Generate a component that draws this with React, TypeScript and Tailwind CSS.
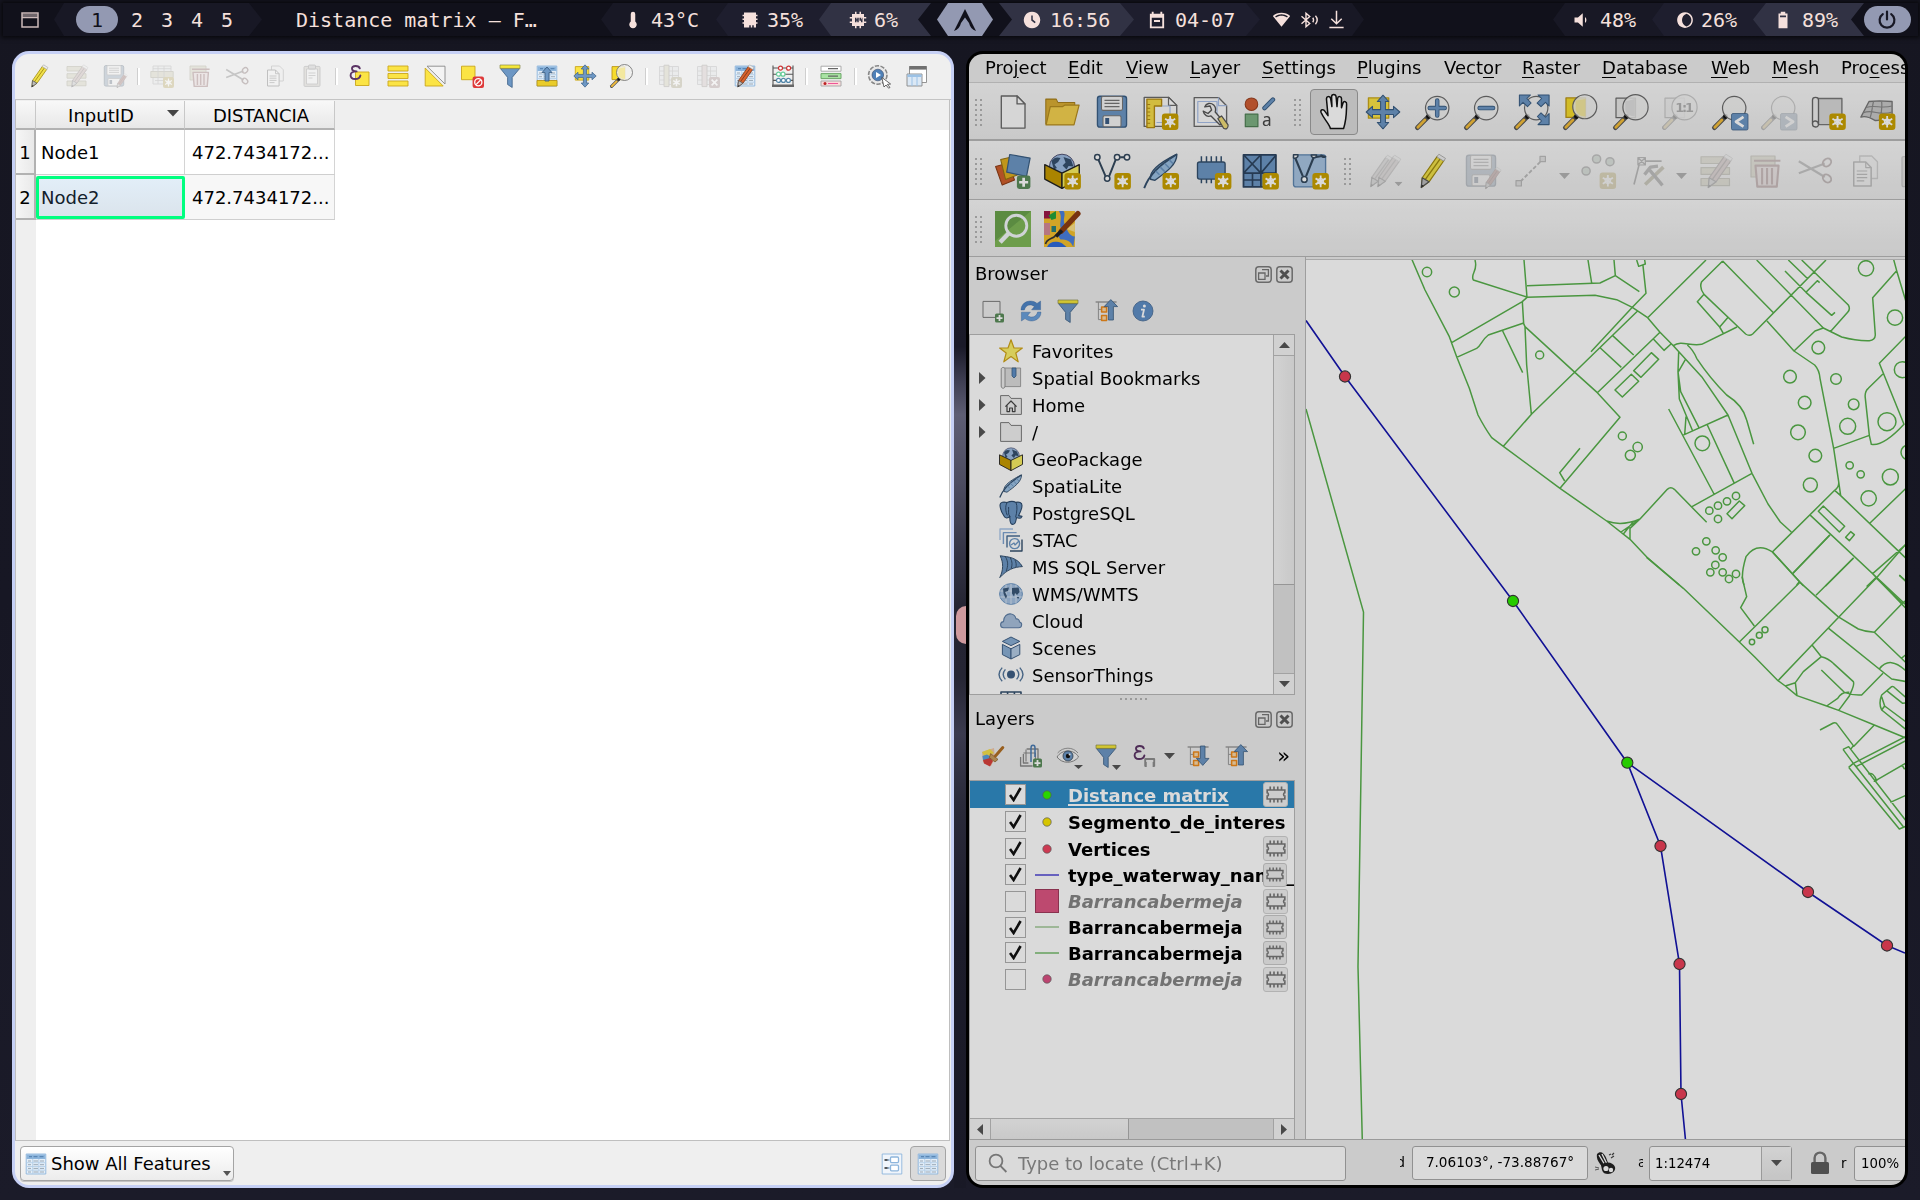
import React from "react";

type Kids = { children?: React.ReactNode };
type IconProps = Kids & { s?: number; off?: boolean };

const Svg = ({ children, s = 24, off }: IconProps) => (
  <svg
    width={s}
    height={s}
    viewBox="0 0 24 24"
    fill="none"
    strokeLinejoin="round"
    className={off ? "shrink-0 overflow-visible opacity-30 saturate-50" : "shrink-0 overflow-visible"}
  >
    {children}
  </svg>
);

/* ---------- shared icon parts ---------- */

const B = "#6d97c4";
const BD = "#3b5f85";

const Star = ({ x = 13, y = 13 }: { x?: number; y?: number }) => (
  <g transform={`translate(${x} ${y})`}>
    <rect width="11" height="11" rx="2" fill="#c9a000" />
    <path d="M5.5 1.6v7.8M2.1 3.5l6.8 4M8.9 3.5l-6.8 4" stroke="#fff" strokeWidth="1.2" />
    <circle cx="5.5" cy="5.5" r="1.8" stroke="#fff" strokeWidth=".8" />
  </g>
);
const Plus = ({ x = 15, y = 15, k = 1 }: { x?: number; y?: number; k?: number }) => (
  <g transform={`translate(${x} ${y}) scale(${k})`}>
    <rect width="9" height="9" rx="1.6" fill="#5a8c5a" />
    <path d="M4.5 1.5v6M1.5 4.5h6" stroke="#fff" strokeWidth="1.8" />
  </g>
);
const Handle = () => (
  <>
    <path d="M8.6 15.4L1.6 22.4" stroke="#555" strokeWidth="3.2" strokeLinecap="round" />
    <path d="M6.6 17.4L1.9 22.1" stroke="#f3bd3c" strokeWidth="1.9" strokeLinecap="round" />
    <circle cx="9" cy="15" r="1.6" fill="#111" />
  </>
);
const Lens = ({ cx = 14.5, cy = 8.5, r = 8 }: { cx?: number; cy?: number; r?: number }) => (
  <circle cx={cx} cy={cy} r={r} fill="#f0f0ee" fillOpacity=".85" stroke="#6b6b6b" strokeWidth=".8" />
);

const MoveArrows = () => (
  <path
    d="M12 .8L15.8 5H13.6V10.4H19V8.2L23.2 12L19 15.8V13.6H13.6V19H15.8L12 23.2L8.2 19H10.4V13.6H5V15.8L.8 12L5 8.2V10.4H10.4V5H8.2z"
    fill={B} stroke={BD} strokeWidth=".7"
  />
);

const PencilShape = ({ body = "#f0e04a", dark = "#a08a10" }: { body?: string; dark?: string }) => (
  <g>
    <path d="M5.5 16.5L15.5 2.2L20 5L10 19.2L5 22.8z" fill={body} stroke={dark} strokeWidth=".8" />
    <path d="M7.6 17.6L17.8 3.4" stroke={dark} strokeWidth=".9" />
    <path d="M15.2 2.6L16.6 .8L21 3.6L19.8 5.4z" fill="#eee" stroke="#aaa" strokeWidth=".6" />
    <path d="M5.5 16.5L10 19.2L4.8 23z" fill="#bbb" stroke="#555" strokeWidth=".8" />
    <path d="M5.2 21L4.6 23.2L6.6 22z" fill="#333" />
  </g>
);

const TableGrid = () => (
  <>
    <rect x="2.2" y="2" width="19.6" height="20" fill="#e4eef8" stroke="#8db5dc" strokeWidth=".9" />
    <rect x="2.6" y="2.4" width="18.8" height="4.6" fill="#8db5dc" />
    <path d="M5 4.7h3M9.5 4.7h4M15.5 4.7h4" stroke="#5a87b5" strokeWidth="1.2" />
    <path d="M8.7 7v15M14.8 7v15M2.5 10.7h19M2.5 14.5h19M2.5 18.2h19" stroke="#b5cfe8" strokeWidth=".9" />
    <path d="M9.5 9h4.5M9.5 12.7h4.5M9.5 16.4h4.5M9.5 20h4.5M16 9h4M16 12.7h4M16 16.4h4M16 20h4M4 9h3M4 12.7h3M4 16.4h3M4 20h3" stroke="#9aa8b5" strokeWidth="1" />
  </>
);

/* ---------- icons ---------- */

const PencilI = (p: IconProps) => <Svg {...p}><PencilShape /></Svg>;
const Pencils = (p: IconProps) => (
  <Svg {...p}><PencilShape body="#c9c2c2" dark="#8a8585" /><g transform="translate(5 0)"><PencilShape body="#cdb9b6" dark="#8f8583" /></g></Svg>
);
const Multi = (p: IconProps) => (
  <Svg {...p}>
    <path d="M2 2.5h19v4.5H2zM2 9.7h19v4.5H2zM2 17h19v4.8H2z" fill="#cfc992" stroke="#8f8a5c" strokeWidth=".8" />
    <g transform="translate(2 0)"><PencilShape body="#cf9d98" dark="#77605d" /></g>
  </Svg>
);
const Floppy = ({ pen, ...p }: IconProps & { pen?: boolean }) => (
  <Svg {...p}>
    <rect x="2.3" y="1.5" width="19.4" height="20.6" rx="1.6" fill={B} stroke={BD} strokeWidth=".9" />
    <rect x="5" y="1.6" width="14" height="9.3" rx="1" fill="#f4f4f4" stroke="#777" strokeWidth=".7" />
    <path d="M7 4.2h10M7 6.3h10M7 8.4h10" stroke="#777" strokeWidth=".8" />
    <rect x="6" y="14.5" width="12" height="7.3" rx="1" fill="#f4f4f4" stroke="#777" strokeWidth=".7" />
    <rect x="7.5" y="16" width="2.6" height="4" fill="#3c5d85" />
    {pen && <g transform="translate(12 9) scale(.64)"><PencilShape body="#c05a50" dark="#774038" /></g>}
  </Svg>
);
const AddRow = (p: IconProps) => (
  <Svg {...p}>
    <path d="M3 2h18v18H3z" fill="#e2e6ea" stroke="#999" strokeWidth=".8" />
    <path d="M.8 7.5h22.4v6H.8z" fill="#cfc992" stroke="#8f8a5c" strokeWidth=".8" />
    <path d="M3 4.7h18M5 16.5h14M8 2v18M14 2v18" stroke="#999" strokeWidth=".8" />
    <Star />
  </Svg>
);
const Trash = (p: IconProps) => (
  <Svg {...p}>
    <path d="M2 2h16v14H2z" fill="#cfc992" stroke="#8f8a5c" strokeWidth=".8" />
    <path d="M5 8.4h15.4l-1.2 14H6.2z" fill="#f0c9c9" stroke="#a04848" strokeWidth="1.4" />
    <path d="M4 5.2h17.6M9.4 10v11M12.7 10v11M16 10v11" stroke="#a04848" strokeWidth="1.4" />
  </Svg>
);
const Scissors = (p: IconProps) => (
  <Svg {...p}>
    <path d="M1.2 5.5L18.5 16M1.2 13.5L18.5 7" stroke="#666" strokeWidth="1.5" />
    <ellipse cx="20" cy="6.3" rx="3" ry="2.4" transform="rotate(-40 20 6.3)" stroke="#7a4848" strokeWidth="1.3" />
    <ellipse cx="20" cy="17" rx="3" ry="2.4" transform="rotate(40 20 17)" stroke="#7a4848" strokeWidth="1.3" />
  </Svg>
);
const Copy = (p: IconProps) => (
  <Svg {...p}>
    <path d="M8.5 2h8l3.8 3.8V17H8.5z" fill="#f2f2f2" stroke="#888" strokeWidth=".9" />
    <path d="M4.5 6h8l3.6 3.7V22H4.5z" fill="#f6f6f6" stroke="#555" strokeWidth="1" />
    <path d="M12.5 6v3.7h3.6M6.5 12h7M6.5 14.2h7M6.5 16.4h7M6.5 18.6h5" stroke="#555" strokeWidth=".8" />
  </Svg>
);
const Paste = (p: IconProps) => (
  <Svg {...p}>
    <rect x="4" y="2.4" width="16" height="20" rx="1" fill="#c9c2b2" stroke="#777" strokeWidth=".9" />
    <rect x="6.5" y="5" width="11" height="15" fill="#f6f6f6" stroke="#777" strokeWidth=".8" />
    <rect x="8.5" y="1" width="7" height="4" rx="1" fill="#bbb" stroke="#666" strokeWidth=".8" />
    <path d="M8.5 9h7M8.5 11.5h7M8.5 14h4" stroke="#777" strokeWidth=".8" />
  </Svg>
);
const Eps = ({ phones, ...p }: IconProps & { phones?: boolean }) => (
  <Svg {...p}>
    {!phones && <rect x="7.5" y="8" width="13.5" height="13.5" fill="#fbe445" stroke="#c9a61b" strokeWidth=".9" />}
    <path d="M11.800 4.400C11 1.200 4 1 4 4.600C4 6.800 6.500 7.400 8.600 7.400C5.200 7.400 2.600 8.600 2.600 11.200C2.600 16.200 11.200 16.200 12.400 11.400" stroke="#5c3566" strokeWidth="1.900" strokeLinecap="round" />
    {phones && <path d="M13.200 22.500v-7.500h9v7.500M13.800 18v5M21.600 18v5" stroke="#8e8e8e" strokeWidth="1.900" />}
  </Svg>
);
const SelAll = () => (
  <Svg><path d="M2 2h20v5H2zM2 9.5h20v5H2zM2 17h20v5H2z" fill="#fbe445" stroke="#c9a61b" strokeWidth=".9" /></Svg>
);
const Invert = () => (
  <Svg>
    <path d="M4 2.2H22V20z" fill="#f4f4f4" stroke="#888" strokeWidth=".9" />
    <path d="M2.2 4V22H20.2z" fill="#fbe445" stroke="#c9a61b" strokeWidth=".9" />
  </Svg>
);
const Desel = () => (
  <Svg>
    <rect x="1.5" y="2.2" width="13.5" height="13.5" fill="#fbe445" stroke="#c9a61b" strokeWidth=".9" />
    <rect x="12.6" y="12.6" width="11.4" height="11.4" rx="2" fill="#de3a3a" />
    <circle cx="18.3" cy="18.3" r="3.6" stroke="#fff" strokeWidth="1.3" />
    <path d="M16 20.6l4.6-4.6" stroke="#fff" strokeWidth="1.3" />
  </Svg>
);
const Funnel = (p: IconProps) => (
  <Svg {...p}>
    <path d="M2.5 4.6L9.6 13.4V20.5L14.2 23.5V13.4L21.6 4.6z" fill={B} stroke={BD} strokeWidth=".8" />
    <rect x="2" y="1" width="20" height="3.4" fill="#f6e83a" stroke="#8b8b4a" strokeWidth=".7" />
  </Svg>
);
const MoveTop = () => (
  <Svg>
    <TableGrid />
    <rect x="2" y="16.5" width="20" height="5.5" fill="#e9cc2a" stroke="#b9951a" strokeWidth=".9" />
    <path d="M12 3L17 8.6H14V17H10V8.6H7z" fill={B} stroke={BD} strokeWidth=".9" />
  </Svg>
);
const PanSel = (p: IconProps) => (
  <Svg {...p}><rect x="2.3" y="2.6" width="13.5" height="13.5" fill="#fbe445" stroke="#c9a61b" strokeWidth=".9" /><MoveArrows /></Svg>
);
const ZoomSel = (p: IconProps) => (
  <Svg {...p}>
    <rect x="2" y="2.6" width="13" height="13" fill="#f6dc2c" stroke="#b9951a" strokeWidth=".9" />
    <Handle /><Lens /><path d="M15 3.4v11.4c-4 .4-6-2-6.6-4.6V4.4z" fill="#f3e68a" fillOpacity=".7" />
  </Svg>
);
const Col = ({ del, ...p }: IconProps & { del?: boolean }) => (
  <Svg {...p}>
    <rect x="1.5" y="2.5" width="19" height="18" fill="#dfe4e8" stroke="#999" strokeWidth=".8" />
    <path d="M1.5 7h19M1.5 11.5h19M1.5 16h19M14.5 3v18" stroke="#999" strokeWidth=".8" />
    <rect x="6" y="1.2" width="5" height="21.4" fill={del ? "#d9b8b8" : "#cfc992"} stroke="#8a8075" strokeWidth=".9" />
    <rect x="13" y="13" width="11" height="11" rx="2" fill={del ? "#b07a7a" : "#a89a50"} />
    <path d={del ? "M15.6 15.6l5.8 5.8M21.4 15.6l-5.8 5.8" : "M18.5 14.8v7.4M15.2 16.6l6.6 3.8M21.8 16.6l-6.6 3.8"} stroke="#fff" strokeWidth="1.6" />
  </Svg>
);
const EditCalc = () => (
  <Svg><TableGrid /><PencilShape body="#d9622c" dark="#7e3a1c" /></Svg>
);
const Abacus = () => (
  <Svg>
    <path d="M2 1.5V21M22 1.5V21M2 4h20M2 10.2h20M2 16.4h20" stroke="#555" strokeWidth="1.1" />
    <path d="M1 21.8h22" stroke="#666" strokeWidth="2.4" />
    <g fill="#fff" strokeWidth="1.2">
      <g stroke="#c33"><circle cx="9.5" cy="4.2" r="2" /><circle cx="17.6" cy="4.2" r="2" /></g>
      <g stroke="#6c9"><circle cx="7.5" cy="10.2" r="2" /><circle cx="12" cy="10.2" r="2" /></g>
      <g stroke="#58a"><circle cx="7.5" cy="16.4" r="2" /><circle cx="12.4" cy="16.4" r="2" /><circle cx="17.4" cy="16.4" r="2" /></g>
    </g>
  </Svg>
);
const CondFmt = () => (
  <Svg>
    <rect x="2" y="2.2" width="20" height="5" fill="#fff" stroke="#aaa" strokeWidth="1" />
    <rect x="2" y="9.6" width="20" height="5" fill="#a9e3a3" stroke="#6da868" strokeWidth="1" />
    <rect x="2" y="17" width="20" height="5" fill="#fbd9d9" stroke="#aaa" strokeWidth="1" />
    <path d="M9 4.7h10M9 12.1h10" stroke="#666" strokeWidth="1.2" />
    <path d="M9 19.5h10" stroke="#e59" strokeWidth="1.2" /><circle cx="6" cy="19.5" r="1.5" fill="#b22" />
  </Svg>
);
const ActionI = () => (
  <Svg>
    <circle cx="10.8" cy="11" r="9" fill="#e8e8e8" stroke="#888" strokeWidth="2" strokeDasharray="4.2 1.4" />
    <circle cx="10.8" cy="11" r="8.4" fill="#e8e8e8" />
    <circle cx="10.8" cy="11" r="5.8" fill="#4f81b8" stroke="#346" strokeWidth=".6" />
    <path d="M9 8l5 3-5 3z" fill="#fff" />
    <path d="M14.8 13.4L23.6 20L20.3 20.4L23 23.4L21.6 24.2L19 21L17 23z" fill="#fff" stroke="#444" strokeWidth=".8" />
  </Svg>
);
const Dock = () => (
  <Svg>
    <rect x="4.5" y="2.5" width="17" height="16" fill="#fff" stroke="#888" strokeWidth=".9" />
    <rect x="4.5" y="2" width="17" height="3.6" fill="#6f6f6f" />
    <rect x="2" y="10" width="15" height="12" fill="#dbe8f5" stroke="#888" strokeWidth=".9" />
    <path d="M2.4 10.4h14.2v2.6H2.4z" fill="#9cc2e6" /><path d="M7 13v9M12 13v9" stroke="#9cc2e6" />
  </Svg>
);
const TableI = () => <Svg><TableGrid /></Svg>;
const FormI = () => (
  <Svg>
    <rect x="2.2" y="2" width="19.6" height="20" fill="#f0f5fb" stroke="#8db5dc" strokeWidth=".9" />
    <path d="M4.5 8h4M4.5 16h4" stroke="#555" strokeWidth="2" />
    <path d="M7 8h3M7 16h3" stroke="#8db5dc" strokeWidth="1.2" />
    <rect x="10.5" y="5" width="8" height="5.6" rx="1" fill="#fff" stroke="#8db5dc" strokeWidth="1.3" />
    <rect x="10.5" y="13.2" width="8" height="5.6" rx="1" fill="#fff" stroke="#8db5dc" strokeWidth="1.3" />
  </Svg>
);

const NewDoc = (p: IconProps) => (
  <Svg {...p}><path d="M4.2 1.3H14.7L20 6.6V22.7H4.2z" fill="#fafafa" stroke="#6a6a6a" strokeWidth=".9" /><path d="M14.7 1.3V6.6H20z" fill="#fff" stroke="#6a6a6a" strokeWidth=".9" /></Svg>
);
const OpenDir = (p: IconProps) => (
  <Svg {...p}>
    <path d="M1.2 20V3.4H8.2L9.2 5.6H20.5V9L19 20z" fill="#d9ad33" stroke="#a8801c" strokeWidth=".7" />
    <path d="M1.4 20.6L4.2 8.4H12.5L14 7.4H23.4L20 20.6z" fill="#f5d150" stroke="#b48c20" strokeWidth=".8" />
  </Svg>
);
const NewLayout = (p: IconProps) => (
  <Svg {...p}>
    <path d="M.8 2.2H17L22.5 7.6V21.6H.8z" fill="#fafafa" stroke="#6a6a6a" strokeWidth=".9" />
    <path d="M17 2.2V7.6H22.5z" fill="#fff" stroke="#6a6a6a" strokeWidth=".8" /><path d="M9 8h9v11H9" stroke="#a9bfe8" strokeWidth=".8" />
    <path d="M2.6 3.4H12.4V8H7.6V22.4H2.6z" fill="#f6dc4a" stroke="#b58b12" strokeWidth=".9" />
    <path d="M2.8 7h2M2.8 9.5h2M2.8 12h2M2.8 14.5h2M2.8 17h2M2.8 19.5h2" stroke="#b58b12" strokeWidth=".8" />
    <Star x={12.6} y={13} />
  </Svg>
);
const LayoutMgr = (p: IconProps) => (
  <Svg {...p}>
    <path d="M.8 2.4H17L22.4 7.8V21.6H.8z" fill="#fafafa" stroke="#6a6a6a" strokeWidth=".9" />
    <path d="M17 2.4V7.8H22.4M3.2 5H16V19H3.2z" stroke="#a9bfe8" strokeWidth=".8" />
    <path d="M7.8 8.6c1-2.6 4-3 6-1.2c1.6 1.6 1.4 3.4 1 4.6l5.6 6.4-2.4 2.2-6-6c-2.2.8-4.6-.2-5.2-3.2l3.2 1.6 2.4-2.4-1-2.6z" fill="#f4f4f4" stroke="#555" strokeWidth=".9" />
    <path d="M16.6 16.4L19 14.6L23.4 20.6C23.6 23 22 23.8 20.4 22.8z" fill="#f0dc7a" stroke="#555" strokeWidth=".8" />
  </Svg>
);
const StyleMgr = (p: IconProps) => (
  <Svg {...p}>
    <circle cx="6.3" cy="6.8" r="4.2" fill="#d05e34" stroke="#9c4020" strokeWidth=".7" />
    <path d="M15 9.4L20.6 3.8" stroke={BD} strokeWidth="3" strokeLinecap="round" /><path d="M15 9.4L20.6 3.8" stroke={B} strokeWidth="1.8" strokeLinecap="round" />
    <rect x="2.2" y="13.4" width="8.4" height="8.4" fill="#7db183" stroke="#4f8055" strokeWidth=".8" />
    <text x="13.4" y="21.4" fontSize="11.5" fontFamily="Noto Sans, sans-serif" fill="#444">a</text>
  </Svg>
);
const Hand = (p: IconProps) => (
  <Svg {...p}>
    <path d="M9.6 23C8.8 19.6 5 16.5 3.4 12.4C2.6 10.2 5 9.8 6 11.6L8 14.4L7 3.6C6.8 1.4 9.4 1 9.8 3.2L10.6 8.4L10.4 1.8C10.4-.2 13.2-.2 13.4 1.8L14 8.4L14.4 3C14.6 1.2 17 1.4 17 3.2V9.2L18 6C18.6 4.4 20.6 5 20.4 6.8C20.2 12 20.6 16 18.4 23z" fill="#fff" stroke="#111" strokeWidth="1" />
  </Svg>
);
const Zoom = ({ kind, ...p }: IconProps & { kind: "in" | "out" | "full" | "layer" | "one" | "last" | "next" }) => (
  <Svg {...p}>
    {(kind === "layer" || kind === "one") && <rect x="2" y="2.8" width="13" height="13" fill="#e8e8e6" stroke="#6b6b6b" strokeWidth=".8" />}
    <Handle />
    {kind === "layer" || kind === "one" ? <Lens cx={15} cy={8.8} r={8.4} /> : <Lens cx={14.8} cy={9.4} r={7.8} />}
    {kind === "in" && <path d="M14.8 4.4v10M9.8 9.4h10" stroke={BD} strokeWidth="3" strokeLinecap="round" />}
    {kind === "in" && <path d="M14.8 4.4v10M9.8 9.4h10" stroke={B} strokeWidth="1.9" strokeLinecap="round" />}
    {kind === "out" && <><path d="M10.4 9.4h9" stroke={BD} strokeWidth="3" strokeLinecap="round" /><path d="M10.4 9.4h9" stroke={B} strokeWidth="1.9" strokeLinecap="round" /></>}
    {kind === "full" && (
      <path d="M3.6.6H11L8.6 3L11.4 6L9 8.4L6 5.6L3.6 8zM23.4.6V8L21 5.6L18 8.4L15.4 6L18.4 3L16 .6zM23.4 20.4H16L18.4 18L15.6 15L18 12.6L21 15.4L23.4 13z" fill={B} stroke={BD} strokeWidth=".7" />
    )}
    {kind === "layer" && <path d="M14.5 3.4v11.4c-4 .2-6-2-6.3-4.6V5z" fill="#cfcfcf" fillOpacity=".5" />}
    {kind === "one" && <text x="8.800" y="12" fontSize="8.600" fontWeight="bold" fontFamily="DejaVu Sans, sans-serif" fill="#222" textLength="12.600">1:1</text>}
    {(kind === "last" || kind === "next") && <rect x="13" y="13" width="11" height="11" rx="1" fill={B} stroke={BD} strokeWidth=".5" />}
    {kind === "last" && <path d="M21 15.2L16 18.5L21 21.8" stroke="#fff" strokeWidth="1.8" />}
    {kind === "next" && <path d="M16.4 15.2L21.4 18.5L16.4 21.8" stroke="#fff" strokeWidth="1.8" />}
  </Svg>
);
const MapView = (p: IconProps) => (
  <Svg {...p}>
    <path d="M3.6 3H20.6V20.4H3.6z" fill="#d8d8d8" stroke="#777" strokeWidth=".9" />
    <path d="M1 4C1 1.6 5 1.6 5 4V20.4C5 22.6 1 22.6 1 20z" fill="#efefef" stroke="#666" strokeWidth=".9" />
    <path d="M1 19.6c0-2.4 4-2 4 .6" stroke="#666" strokeWidth=".9" /><Star x={12.2} y={13} />
  </Svg>
);
const Map3D = (p: IconProps) => (
  <Svg {...p}>
    <path d="M.6 15.4L6 5L13 4.6L21.4 5V15.6C16 14.6 12 19 9.6 17.4C6.6 15.6 4 14.4.6 15.4z" fill="#c8c8c8" stroke="#777" strokeWidth=".9" />
    <path d="M4 9C10 7 14 10 21.4 8M2.4 12.4C9 10 13 15 21.4 12M9 5C8 9 8 13 6.6 16M14.4 5C15 9 14 13 13.6 16" stroke="#888" strokeWidth=".8" /><Star x={12.6} y={13} />
  </Svg>
);

const AddLayers = (p: IconProps) => (
  <Svg {...p}>
    <path d="M.4 9L9 6.6L13 18L4.8 21.4z" fill="#cf5f2c" stroke="#8f3c16" strokeWidth=".7" />
    <path d="M3.8 4.4L14 2L15.6 14.4L7 17.6z" fill="#e0b020" stroke="#967412" strokeWidth=".7" />
    <path d="M9.8 1L23.4 3.4L21 15.6L7.8 12.8z" fill={B} stroke={BD} strokeWidth=".8" /><Plus x={14.6} y={15} />
  </Svg>
);
const GeoPkg = ({ star, ...p }: IconProps & { star?: boolean }) => (
  <Svg {...p}>
    <circle cx="12" cy="9.2" r="8.4" fill="#9dbbe0" stroke="#446" strokeWidth=".6" />
    <path d="M5 5.4C7 2.6 9 2.6 11 3.4L9.4 6L7 7.6L8.6 10L6.6 11zM13 2.6L18 4.4L19.6 9L16.4 8.6L15 11L12.4 8.4L14.4 6.4z" fill="#35506e" />
    <path d="M.5 7.8L12 13.4V23.6L.5 17.4z" fill="#c79a00" stroke="#222" strokeWidth=".9" />
    <path d="M23.5 7.8L12 13.4V23.6L23.5 17.4z" fill="#f8ee62" stroke="#222" strokeWidth=".9" />
    {star && <Star x={13.6} y={13.4} />}
  </Svg>
);
const NewShape = (p: IconProps) => (
  <Svg {...p}>
    <path d="M3 4.6L7.6 15.2M10.2 15.2L14.4 4.6M17.4 2.8h3.2" stroke="#34495e" strokeWidth="1.3" />
    <g fill="#fff" stroke="#34495e" strokeWidth="1"><circle cx="2.2" cy="2.8" r="1.8" /><circle cx="15.4" cy="2.8" r="1.8" /><circle cx="22" cy="2.8" r="1.8" /><circle cx="8.8" cy="17" r="1.8" /></g>
    <Star x={13.6} y={13.4} />
  </Svg>
);
const Feather = ({ star, ...p }: IconProps & { star?: boolean }) => (
  <Svg {...p}>
    <path d="M5 17.500C4 13 8 8 22.600 .800C22.600 8 15 13 8 18.200z" fill="#9cc0e2" stroke="#34506e" strokeWidth=".9" />
    <path d="M.8 23.4C4 15 10 8.6 22.4 1" stroke="#34506e" strokeWidth="1.3" />
    <path d="M8.500 12l2.500 2.500M11.500 9.400l3 3M14.500 7l3 3M17.500 4.600l2.500 2.500" stroke={B} strokeWidth="1" />
    {star && <Star x={13} y={13.4} />}
  </Svg>
);
const Chip = (p: IconProps) => (
  <Svg {...p}>
    <path d="M5.6 2.2v18M9 2.2v18M12.2 2.2v18M15.6 2.2v18M18.8 2.2v18" stroke="#34506e" strokeWidth="1" />
    <rect x="3" y="6" width="18.4" height="11.4" rx="1.4" fill={B} stroke="#34506e" strokeWidth=".9" /><Star x={14.6} y={13.4} />
  </Svg>
);
const MeshI = (p: IconProps) => (
  <Svg {...p}>
    <rect x="1" y="1.2" width="21.6" height="21.4" fill={B} stroke="#2c4460" strokeWidth="1.2" />
    <path d="M1 13.4H22.6M12.6 1.2V22.6M1 1.2L12.6 13.4L22.6 1.6M12.6 1.2L1 13.4M1 18H12.6M7 13.4v9.2" stroke="#2c4460" strokeWidth="1.1" /><Star x={13.6} y={13.4} />
  </Svg>
);
const Virtual = (p: IconProps) => (
  <Svg {...p}>
    <rect x="1" y="1.2" width="21.4" height="21.4" rx="1.6" fill="#a9c4e2" stroke="#5f86b0" strokeWidth=".9" />
    <path d="M1.6 2L7.2 15.4M9.4 15.4L14.4 3L20 2" stroke="#34495e" strokeWidth="1.4" />
    <g fill="#fff" stroke="#34495e" strokeWidth="1"><circle cx="8.2" cy="17.6" r="1.9" /><path d="M1 1.2h3a2 2 0 0 1-3 2zM12.8 1.4a1.8 1.8 0 0 0 3.6 0zM19.4 1.4a1.8 1.8 0 0 0 3 1z" /></g>
    <Star x={13.6} y={13.4} />
  </Svg>
);
const Digitize = (p: IconProps) => (
  <Svg {...p}><path d="M5 19L18.6 5.4" stroke="#444" strokeWidth="1.2" strokeDasharray="2.6 1.4" /><path d="M2 18.4h3.6v3.6H2zM18 2.2h3.6v3.6H18z" fill="#bbb" stroke="#444" strokeWidth=".8" /></Svg>
);
const Points = (p: IconProps) => (
  <Svg {...p}><g fill="#9cc4a4" stroke="#555" strokeWidth="1"><circle cx="10.4" cy="4" r="2.7" /><circle cx="19.3" cy="5.8" r="2.7" /><circle cx="3.4" cy="12" r="2.7" /></g><Star x={12.4} y={13} /></Svg>
);
const Vertex = (p: IconProps) => (
  <Svg {...p}>
    <path d="M2 21L6 5.4H20.4" stroke="#444" strokeWidth="1.1" /><path d="M4.6 3h5v5h-5zM4.6 3l5 5M9.6 3l-5 5" fill="#ddd" stroke="#444" strokeWidth=".8" />
    <path d="M9.4 21L21.6 9.4" stroke="#8a7a30" strokeWidth="2.4" /><path d="M12.6 11.6L21 21.6M9 14.4l4-5 5-.6" stroke="#555" strokeWidth="2.2" />
  </Svg>
);
const GreenSearch = (p: IconProps) => (
  <Svg {...p}>
    <rect width="24" height="24" fill="#80b858" /><path d="M0 0H24L0 20z" fill="#6aa34c" />
    <circle cx="14.2" cy="9.8" r="7" stroke="#f3f7fa" strokeWidth="1.9" /><path d="M9 15L3.4 20.8" stroke="#f3f7fa" strokeWidth="3" />
  </Svg>
);
const OsmI = (p: IconProps) => (
  <Svg {...p}>
    <rect width="20.6" height="24" fill="#f4c02c" />
    <path d="M0 0h4v5H0z" fill="#9c1748" /><path d="M0 8h4v8H0z" fill="#d58a98" /><path d="M3 3l5-3v5l-3 1z" fill="#23a33a" /><path d="M5 10h3v4H5z" fill="#2a7f78" />
    <path d="M10 0C13 5 9 9 12 13L9 16L11 19C15 19 18 20 19.500 24L20.600 17C17 17 15 12 14 9C12 6 15 2 13 0z" fill="#4a80e0" />
    <path d="M2 24C4 20 8 20 12 21.500L15 24z" fill="#2e6bdc" /><path d="M15 12l5.600-4v6z" fill="#fbe08a" />
    <path d="M11.5 13.5L22.6 1.8" stroke="#8c3c12" strokeWidth="3.600" strokeLinecap="round" /><path d="M1 22c1-4 5-3 7-6l3-3" stroke="#333" strokeWidth="1.1" /><path d="M8 17l4-4" stroke="#222" strokeWidth="2.4" />
  </Svg>
);

/* panel + tree icons */
const AddSel = () => <Svg><path d="M2 2.4h17v16H2z" stroke="#7c7c7c" strokeWidth="1" /><Plus x={14} y={14.6} /></Svg>;
const Refresh = () => (
  <Svg>
    <path d="M2 11C2 2.6 12-.6 18 4.4L21.6 2V10.8H12.6L15.4 7.6C12 4.6 6.6 5.6 5.4 11z" fill="#4f86c8" stroke="#3a68a0" strokeWidth=".4" />
    <path d="M22 13C22 21.4 12 24.6 6 19.6L2.4 22V13.2H11.4L8.6 16.4C12 19.4 17.4 18.4 18.6 13z" fill="#6ba0dc" stroke="#3a68a0" strokeWidth=".4" />
  </Svg>
);
const Tree = ({ down }: { down?: boolean }) => (
  <Svg>
    <path d="M1.6 3h21" stroke="#999" strokeWidth="1.4" /><path d="M4.4 3v17.6h4M4.4 10.4h4" stroke="#999" strokeWidth="1" />
    <path d="M7.6 8h5v5h-5zM7.6 16.6h5v5h-5z" fill="#fbd9a8" stroke="#ef8b1c" strokeWidth="1.5" />
    <path d={down ? "M14.4 2h4.6v12.4h4L16.8 21.4L10.4 14.4h4z" : "M16.8 .6L23.6 7.6H19.4V21H14.4V7.6H10.2z"} fill={B} stroke={BD} strokeWidth=".8" />
  </Svg>
);
const Info = () => (
  <Svg><circle cx="12" cy="12" r="10" fill="#5f8fc6" stroke="#456a94" strokeWidth=".8" /><circle cx="13.4" cy="7" r="1.5" fill="#fff" /><path d="M10 10.6h3l-1.6 7h2.4" stroke="#fff" strokeWidth="1.8" /></Svg>
);
const FavI = () => <Svg><path d="M12 .8L15 9H23.4L16.8 14L19.2 22.8L12 17.6L4.8 22.8L7.2 14L.6 9H9z" fill="#fbf06a" stroke="#d0a41a" strokeWidth="1.2" /></Svg>;
const Bookmark = () => (
  <Svg><path d="M4 2H21.6V20.6H4z" fill="#dcdcdc" stroke="#999" strokeWidth=".9" /><path d="M2.2 3.4C2.2 .8 6 .8 6 3.4V20C6 23 2.2 23 2.2 20z" fill="#eee" stroke="#888" strokeWidth=".9" /><path d="M13 2h4v8l-2 2-2-2z" fill="#5f8fc6" stroke={BD} strokeWidth=".8" /></Svg>
);
const Folder = ({ home }: { home?: boolean }) => (
  <Svg>
    <path d="M1.6 21.4V2.6H10L12 5.4H22.4V21.4z" fill="#f0f0f0" stroke="#7a7a7a" strokeWidth="1" />
    {home && <path d="M6.4 13.6L12 8L17.6 13.6M8 12.6V18.6H10.6V15H13.4V18.6H16V12.6" stroke="#444" strokeWidth="1.2" />}
  </Svg>
);
const Elephant = () => (
  <Svg>
    <path d="M1 4C1 1 5 .6 8 1.6C11 .2 15 .4 17 1.4C20 .6 23 1.6 23 4.4C23 8 21.4 11 19.6 14.6L23 15.4C22 17.4 19.4 17.4 17.6 16.6C16.6 19 17.4 23.4 13.6 23.4C10.4 23.4 11 19 10.8 15.4C9 17.6 6 17.4 5 15C3 12 1 8 1 4z" fill={B} stroke="#2c4a6c" strokeWidth="1.1" />
    <path d="M8 1.8C6 5 6.6 11 8.4 14.4M17 1.6C18.6 5 18 11 16.6 16.4M11 15.6C8.6 13 10 9.6 9.6 6" stroke="#2c4a6c" strokeWidth="1" />
  </Svg>
);
const Stac = () => (
  <Svg>
    <path d="M1 12V1H14" stroke="#a9c4e8" strokeWidth="1.3" /><path d="M4.4 16V4.6H17.6" stroke="#7fa4d0" strokeWidth="1.4" /><path d="M8 19.4V8H21" stroke="#4b6f98" strokeWidth="1.4" />
    <path d="M11 23h12V11.4" stroke="#34506e" strokeWidth="1.4" /><circle cx="15.6" cy="15.6" r="5" stroke={B} strokeWidth="1.4" /><path d="M12 17l3-2 1 2 4-4" stroke={B} strokeWidth="1.3" />
  </Svg>
);
const Mssql = () => (
  <Svg><path d="M1.2 .8C10 2 18 2.4 23.4 11.6C15 12 8 14.6 .8 22.6C4.4 15 4.6 8 1.2 .8z" fill={B} stroke="#34506e" strokeWidth="1" /><path d="M6.6 2c2.6 4.6 2.6 9 .6 14M11.4 3c2 3.6 2 7 .8 10.6M16 5c1.2 2.4 1.4 4.6 1 7" stroke="#34506e" strokeWidth="1" /></Svg>
);
const Globe = () => (
  <Svg>
    <ellipse cx="12" cy="12" rx="11.4" ry="10.4" fill="#a5c1e2" stroke={B} strokeWidth="1" /><path d="M1 9h22M1 15h22M7 2.6v19M17 2.6v19M12 1.6v20.8" stroke="#dfeaf5" strokeWidth=".8" />
    <path d="M4 6.4L10 5.4L9 9L6 10L8 14L7 17L4.6 12zM13 6L19.6 5.4L20.6 10L18 13L16 11L15 14.6L13 11.4zM17.6 15h2.6l-1 2z" fill="#3a5878" />
  </Svg>
);
const CloudI = () => <Svg><path d="M4.6 18.8C.6 18.8.6 13 4.6 12.6C4.4 8 8 4 12.4 5C15.6 5.6 16.6 8 17 10C19 9.6 20.6 11 20.4 13C23.6 13.4 23.4 18.8 19.6 18.8z" fill="#a9c0dc" stroke="#5d7ea6" strokeWidth="1.1" /></Svg>;
const Scene = () => (
  <Svg><g stroke="#3e5f85" strokeWidth="1"><path d="M3.4 5.4L12 1L20.8 5.4L12 9.6z" fill="#8aaed4" /><path d="M3.4 8.4L12 12.8V23L3.4 18.6z" fill="#8aaed4" /><path d="M20.8 8.4L12 12.8V23L20.8 18.6z" fill="#b4cbe4" /></g></Svg>
);
const Sensor = () => (
  <Svg><circle cx="12" cy="11.4" r="4" fill="#3e5f85" /><path d="M6.4 6.4c-2.6 3-2.6 7 0 10M3.2 4.6c-4 4.4-4 9.4 0 13.6M17.6 6.4c2.6 3 2.6 7 0 10M20.8 4.6c4 4.4 4 9.4 0 13.6" stroke="#55779c" strokeWidth="1.4" /></Svg>
);
const Tiles = () => <Svg><path d="M2 2h20v20H2zM2 8h20M8.6 2v20M15.4 2v20" stroke="#34506e" strokeWidth="1.6" /></Svg>;

const Brush = () => (
  <Svg>
    <path d="M1 8L13 4L14 14L10 22L2 18z" fill="#f0c8a8" /><path d="M1 8l8-3 4 4-9 4z" fill="#f6e04a" /><path d="M1.4 12L6 10.4L12 14L8 18L2 16z" fill="#5ca0dc" /><path d="M2 16L9 14L12 17L9 22.4L3 19.4z" fill="#d8403c" />
    <path d="M9.6 9.6L17 15.4L14 18L8.4 13.6z" fill="#c89c60" stroke="#8a6020" strokeWidth=".7" /><path d="M14.4 12L21.8 3.6" stroke="#b26f24" strokeWidth="3" strokeLinecap="round" />
  </Svg>
);
const AddGroup = () => (
  <Svg>
    <path d="M1.6 13v9h12M4.4 10v9h5M7.6 5H19v12" stroke="#888" strokeWidth="1.3" /><path d="M4.4 9h12v11M7 5.4v12" stroke="#888" strokeWidth="1.1" />
    <path d="M12 18V4c0-3.6 4-3.6 4 0v9" stroke="#4b7cb2" strokeWidth="1.5" /><Plus x={14} y={14.6} />
  </Svg>
);
const Eye = () => (
  <Svg>
    <path d="M1 13C6 5 18 5 22.6 13C17 20 6 20 1 13z" fill="#f4f4f4" stroke="#888" strokeWidth="1" /><path d="M1.6 9C7 2.6 17 2.6 22 9" stroke="#999" strokeWidth="1" />
    <circle cx="12" cy="12" r="5" fill={B} stroke="#345" strokeWidth=".8" /><circle cx="12" cy="12" r="2.2" fill="#111" /><circle cx="13.6" cy="10.4" r="1" fill="#fff" />
    <path d="M18 21h9l-4.5 4z" fill="#555" />
  </Svg>
);
const MemI = ({ small }: { small?: boolean }) => (
  <span className={small ? "flex h-[24px] w-[24px] items-center justify-center rounded-[3px] border border-[#c8c8c8] bg-[#ececec]" : "flex h-[25px] w-[25px] items-center justify-center rounded-[3px] border border-[#d0d0d0] bg-[#f0f0f0]"}>
    <svg width={small ? 18 : 20} height={small ? 15 : 17} viewBox="1 0.500 17 15" preserveAspectRatio="none" fill="none" stroke="#777" strokeWidth="1.400" className="shrink-0">
      <path d="M4.6 1v3M7.8 1v3M11 1v3M14.2 1v3M4.6 12v3M7.8 12v3M11 12v3M14.2 12v3" /><path d="M2 4h15v2.4c-1.4 0-1.4 3 0 3V12H2V9.4c1.4 0 1.4-3 0-3z" />
    </svg>
  </span>
);

/* ---------- top bar ---------- */

const NfI = ({ d, w = 18, sw = 0, vb = "0 0 24 24" }: { d: string; w?: number; sw?: number; vb?: string }) => (
  <svg width={w} height={w} viewBox={vb} fill={sw ? "none" : "#f5e0dc"} stroke={sw ? "#f5e0dc" : "none"} strokeWidth={sw} fillRule="evenodd" className="shrink-0"><path d={d} /></svg>
);

const TopBar = () => (
  <div className="mx-[3px] mt-[3px] flex h-[33px] w-[1915px] items-stretch bg-[#11111b] font-['DejaVu_Sans_Mono',monospace] text-[20px] leading-none text-[#f5e0dc] shadow-[0_0_4px_2px_rgba(0,0,0,.6)]">
    <div className="flex w-[51px] items-center pl-[18px]">
      <svg width="18" height="16" viewBox="0 0 18 16" fill="none" stroke="#cbb9b9" strokeWidth="1.5"><path d="M1 1h16v14H1zM1 5.4h16" /><path d="M1 3.2h16" strokeWidth="3" opacity=".5" /></svg>
    </div>
    <div className="flex w-[208px] items-center bg-[#181825] pl-[22px] [clip-path:polygon(10px_0,195px_0,100%_50%,195px_100%,10px_100%,0_50%)]">
      <span className="flex h-[27px] w-[42px] items-center justify-center rounded-full bg-[#9399b2] text-[#11111b]">1</span>
      <span className="ml-[4px] flex w-[120px]">
        {["2", "3", "4", "5"].map((n) => <span key={n} className="w-[30px] text-center">{n}</span>)}
      </span>
    </div>
    <div className="flex w-[339px] items-center whitespace-pre pl-[34px]">Distance matrix – F…</div>
    <div className="flex w-[132px] items-center gap-[9px] bg-[#181825] pl-[23px] [clip-path:polygon(12px_0,100%_0,100%_100%,12px_100%,0_50%)]">
      <NfI d="M9 14V4a3 3 0 0 1 6 0v10a5 5 0 1 1-6 0z" /><span>43°C</span>
    </div>
    <div className="-ml-[17px] flex w-[120px] items-center gap-[8px] bg-[#1e1e2e] pl-[25px] [clip-path:polygon(12px_0,100%_0,100%_100%,12px_100%,0_50%)]">
      <NfI d="M4 2h16v3h2v2h-2v3h2v2h-2v3h2v2h-2v5h-3v-3h-2v3h-2v-3h-2v3H4v-5H2v-2h2v-3H2v-2h2V7H2V5h2z" /><span>35%</span>
    </div>
    <div className="-ml-[17px] flex w-[112px] items-center gap-[7px] bg-[#313244] pl-[30px] [clip-path:polygon(12px_0,100%_0,99px_50%,100%_100%,12px_100%,0_50%)]">
      <NfI d="M8 1h2v3h4V1h2v3h4v4h3v2h-3v4h3v2h-3v4h-4v3h-2v-3h-4v3H8v-3H4v-4H1v-2h3v-4H1V8h3V4h4zM8 9v6h2v-2h1v2h2V9h-2v2h-1V9zM14 9v4h2v2h2V9h-1v2h-1V9z" /><span>6%</span>
    </div>
    <div className="ml-[6px] flex w-[56px] items-center justify-center bg-[#9399b2] [clip-path:polygon(11px_0,45px_0,100%_50%,45px_100%,11px_100%,0_50%)]">
      <svg width="24" height="22" viewBox="0 0 24 22" fill="#11111b"><path d="M12 0L23 22C19 20.500 17 18 16 14L12 8.500L8 14C7 18 5 20.500 1 22z" /></svg>
    </div>
    <div className="relative z-20 ml-[6px] flex w-[135px] items-center gap-[9px] bg-[#313244] pl-[24px] [clip-path:polygon(0_0,121px_0,100%_50%,121px_100%,0_100%,13px_50%)]">
      <NfI d="M12 1a11 11 0 1 0 .01 0zM11 6h2v5.4l4 3.4-1.4 1.6L11 12.6z" /><span>16:56</span>
    </div>
    <div className="relative z-10 -ml-[14px] flex w-[140px] items-center gap-[9px] bg-[#1e1e2e] pl-[28px] [clip-path:polygon(0_0,126px_0,100%_50%,126px_100%,0_100%)]">
      <NfI d="M5 1h2.500v2.500h9V1H19v2.500h2.500V23h-19V3.500H5zM5 9v11.500h14V9zM8 12h8v2.500H8z" /><span>04-07</span>
    </div>
    <div className="-ml-[14px] flex w-[118px] items-center gap-[9px] bg-[#181825] pl-[26px] [clip-path:polygon(0_0,106px_0,100%_50%,106px_100%,0_100%)]">
      <NfI w={19} d="M1 7.5C7 2 17 2 23 7.5L12 21z M4 8l1 1.4C9 6.4 15 6.4 19 9.4L20 8C15 4.4 9 4.4 4 8z" />
      <NfI w={18} sw={1.9} d="M2 7l11 9.600-5 4.400V3l5 4.400L2 17M17 9c1.400 2 1.400 4 0 6M20.600 6.400c3 3.600 3 7.600 0 11.200" />
      <NfI w={19} sw={1.9} d="M12 1v16M5.400 11l6.600 6.400L18.600 11M3 22h18" />
    </div>
    <div className="ml-[189px] flex w-[116px] items-center gap-[9px] bg-[#181825] pl-[20px] [clip-path:polygon(12px_0,100%_0,100%_100%,12px_100%,0_50%)]">
      <NfI d="M2 8.6h4.6L13 3v18l-6.4-5.6H2zM16 8c2.6 2 2.6 6 0 8z" /><span>48%</span>
    </div>
    <div className="-ml-[17px] flex w-[119px] items-center gap-[7px] bg-[#1e1e2e] pl-[24px] [clip-path:polygon(12px_0,100%_0,100%_100%,12px_100%,0_50%)]">
      <NfI d="M12 1.500a10.500 10.500 0 1 0 .01 0zM14 3.500c4 1.200 6.500 4.500 6.500 8.500s-2.500 7.300-6.500 8.500c-3.500-1-6-4.500-6-8.500s2.500-7.500 6-8.500z" /><span>26%</span>
    </div>
    <div className="-ml-[18px] flex w-[111px] items-center gap-[10px] bg-[#313244] pl-[21px] [clip-path:polygon(13px_0,100%_0,98px_50%,100%_100%,13px_100%,0_50%)]">
      <NfI d="M9 1h6v2.400h3V23H6V3.400h3zM8 6v2.400h8V6z" /><span>89%</span>
    </div>
    <div className="my-[3px] flex w-[47px] items-center justify-center rounded-full bg-[#9399b2] pr-[2px]">
      <svg width="20" height="20" viewBox="0 0 20 20" fill="none" stroke="#181825" strokeWidth="2.2" strokeLinecap="round"><path d="M10 1.500v8M5.800 4.200a7.400 7.400 0 1 0 8.400 0" /></svg>
    </div>
  </div>
);

/* ---------- attribute table window ---------- */

const TSlot = ({ children }: Kids) => <span className="flex w-[37.4px] shrink-0 justify-center">{children}</span>;
const TSep = () => <span className="flex w-[11px] shrink-0 justify-center"><i className="h-[17px] w-[3px] border-l border-[#cfcfcf] bg-white" /></span>;

const HeadCell = ({ children, w }: Kids & { w: string }) => (
  <div className={`${w} relative flex h-[29px] items-center justify-center border-b-2 border-r border-b-[#b2b2b2] border-r-[#c8c8c8] bg-gradient-to-b from-[#f8f8f8] to-[#e8e8e8] pt-[3px]`}>{children}</div>
);

const AttributeWindow = () => (
  <section className="flex h-[1137px] w-[942px] flex-col overflow-hidden rounded-[17px] border-[3px] border-[#c6d0f5] bg-[#efefef] text-black">
    <div className="flex h-[46px] items-center border-b border-[#c4c4c4] pb-[1px] pl-[5.500px]">
      <TSlot><PencilI /></TSlot><TSlot><Multi off /></TSlot><TSlot><Floppy pen off /></TSlot>
      <TSep />
      <TSlot><AddRow off /></TSlot><TSlot><Trash off /></TSlot><TSlot><Scissors off /></TSlot><TSlot><Copy off /></TSlot><TSlot><Paste off /></TSlot>
      <TSep />
      <TSlot><Eps /></TSlot><TSlot><SelAll /></TSlot><TSlot><Invert /></TSlot><TSlot><Desel /></TSlot><TSlot><Funnel /></TSlot><TSlot><MoveTop /></TSlot><TSlot><PanSel /></TSlot><TSlot><ZoomSel /></TSlot>
      <TSep />
      <TSlot><Col off /></TSlot><TSlot><Col del off /></TSlot><TSlot><EditCalc /></TSlot><TSlot><Abacus /></TSlot>
      <TSep />
      <TSlot><CondFmt /></TSlot>
      <TSep />
      <TSlot><ActionI /></TSlot><TSlot><Dock /></TSlot>
    </div>
    <div className="mr-[1px] flex flex-1 flex-col border-x border-b border-[#bfbfbf] bg-white">
      <div className="flex h-[30px] shrink-0 bg-[#efefef] pt-px">
        <HeadCell w="w-[20px]" />
        <HeadCell w="w-[149px]">
          <span className="mr-[18px]">InputID</span>
          <svg className="absolute right-[5px] top-[9px]" width="12" height="7" viewBox="0 0 12 7"><path d="M0 0h12L6 6.500z" fill="#444" /></svg>
        </HeadCell>
        <HeadCell w="w-[150px]"><span className="ml-[3px]">DISTANCIA</span></HeadCell>
      </div>
      <div className="flex flex-1">
        <div className="w-[20px] bg-[#efefef]">
          {["1", "2"].map((n) => (
            <div key={n} className="flex h-[45px] items-center justify-center border-b-2 border-r-2 border-[#b2b2b2] bg-gradient-to-r from-[#f6f6f6] to-[#e9e9e9] pt-[3px]">{n}</div>
          ))}
        </div>
        <div className="w-[299px]">
          <div className="flex h-[45px] border-b border-[#cfcfcf]">
            <div className="flex w-[149px] items-center border-r border-[#d4d4d4] pl-[5px] pt-[2px]">Node1</div>
            <div className="flex w-[150px] items-center border-r border-[#d4d4d4] pl-[7px] pt-[2px]">472.7434172...</div>
          </div>
          <div className="flex h-[45px] border-b border-[#cfcfcf] bg-[#f7f7f7]">
            <div className="mt-px flex w-[149px] items-center rounded-[2px] border-[3px] border-[#00ff7f] bg-gradient-to-b from-[#e2eef8] to-[#dbe4ec] pl-[2px] pt-[1px] text-[#12202c]">Node2</div>
            <div className="flex w-[150px] items-center border-r border-[#d4d4d4] pl-[7px] pt-[2px]">472.7434172...</div>
          </div>
        </div>
      </div>
    </div>
    <div className="flex h-[44px] shrink-0 items-start px-[5px] pt-[5px]">
      <div className="relative flex h-[35px] w-[214px] items-center gap-[3px] rounded-[4px] border border-[#a4a4a4] bg-gradient-to-b from-white to-[#ececec] pl-[3px] shadow-[0_1px_0_#c4c4c4]">
        <TableI /><span>Show All Features</span>
        <svg className="absolute bottom-[4px] right-[2px]" width="8" height="5" viewBox="0 0 8 5"><path d="M0 0h8L4 5z" fill="#555" /></svg>
      </div>
      <div className="ml-auto flex items-center gap-[6px]">
        <FormI />
        <div className="flex h-[35px] w-[36px] items-center justify-center rounded-[4px] border border-[#a4a4a4] bg-[#dadada]"><TableI /></div>
      </div>
    </div>
  </section>
);

/* ---------- main GIS window (inactive, dimmed) ---------- */

const menu: [string, string, string, string][] = [
  ["Pro", "j", "ect", "w-[83px]"], ["", "E", "dit", "w-[58px]"], ["", "V", "iew", "w-[64px]"], ["", "L", "ayer", "w-[72px]"],
  ["", "S", "ettings", "w-[95px]"], ["", "P", "lugins", "w-[87px]"], ["Vect", "o", "r", "w-[78px]"], ["", "R", "aster", "w-[80px]"],
  ["", "D", "atabase", "w-[109px]"], ["", "W", "eb", "w-[61px]"], ["", "M", "esh", "w-[69px]"], ["Pro", "c", "essing", "w-[110px]"],
];

const GSlot = ({ children, w = "w-[49.5px]" }: Kids & { w?: string }) => <span className={`${w} relative flex shrink-0 items-center justify-center`}>{children}</span>;
const Grip = ({ w }: { w: string }) => (
  <span className={`${w} flex shrink-0 items-center justify-center`}>
    <span className="grid grid-cols-2 gap-x-[3px] gap-y-[3px]">
      {Array.from({ length: 12 }, (_, i) => <i key={i} className="h-[2px] w-[2px] bg-[#b4b4b4]" />)}
    </span>
  </span>
);
const Drop = ({ faint }: { faint?: boolean }) => (
  <svg width="11" height="6" viewBox="0 0 11 6" className="shrink-0"><path d="M0 0h11L5.500 6z" fill={faint ? "#b4b4b4" : "#555"} /></svg>
);

const PanelTitle = ({ children }: Kids) => (
  <div className="flex h-[34px] shrink-0 items-center pl-[6px] pr-[12px]">
    <span className="mr-auto">{children}</span>
    <svg width="38" height="17" viewBox="0 0 38 17" fill="none">
      <rect x=".8" y=".8" width="15.400" height="15.400" rx="3" stroke="#7c7c7c" strokeWidth="1.500" />
      <path d="M7 3.600h6.400V10H11M3.600 7H10v6.400H3.600z" stroke="#777" strokeWidth="1.300" />
      <rect x="21.800" y=".8" width="15.400" height="15.400" rx="3" stroke="#7c7c7c" strokeWidth="1.500" />
      <path d="M25.500 4.500l8 8M33.500 4.500l-8 8" stroke="#5c5c5c" strokeWidth="3" />
    </svg>
  </div>
);

const tree: [string, React.ReactNode, boolean][] = [
  ["Favorites", <FavI />, false], ["Spatial Bookmarks", <Bookmark />, true], ["Home", <Folder home />, true], ["/", <Folder />, true],
  ["GeoPackage", <GeoPkg />, false], ["SpatiaLite", <Feather />, false], ["PostgreSQL", <Elephant />, false], ["STAC", <Stac />, false],
  ["MS SQL Server", <Mssql />, false], ["WMS/WMTS", <Globe />, false], ["Cloud", <CloudI />, false], ["Scenes", <Scene />, false],
  ["SensorThings", <Sensor />, false], ["Vector Tiles", <Tiles />, false],
];

type Layer = { name: string; on: boolean; dot?: string; line?: string; box?: boolean; mem?: boolean; h: string; sel?: boolean; small?: boolean };
const layers: Layer[] = [
  { name: "Distance matrix", on: true, dot: "#30fa00", mem: true, h: "h-[27px]", sel: true },
  { name: "Segmento_de_interes", on: true, dot: "#fae600", h: "h-[27px]" },
  { name: "Vertices", on: true, dot: "#f04460", mem: true, h: "h-[27px]" },
  { name: "type_waterway_name_", on: true, line: "#3f36d0", mem: true, h: "h-[25.5px]", small: true },
  { name: "Barrancabermeja", on: false, box: true, mem: true, h: "h-[27px]" },
  { name: "Barrancabermeja", on: true, line: "#9bc490", mem: true, h: "h-[25.5px]", small: true },
  { name: "Barrancabermeja", on: true, line: "#6cb862", mem: true, h: "h-[25.5px]", small: true },
  { name: "Barrancabermeja", on: false, dot: "#dc5083", mem: true, h: "h-[27px]" },
];

const BrowserPanel = () => (
  <div className="flex h-[438px] shrink-0 flex-col">
    <PanelTitle>Browser</PanelTitle>
    <div className="flex h-[43px] shrink-0 items-center gap-[13.500px] pb-[5px] pl-[12px] pt-[2px]">
      <AddSel /><Refresh /><Funnel /><Tree /><Info />
    </div>
    <div className="mr-[10px] flex h-[361px] overflow-hidden border border-[#b9b9b9] bg-white">
      <div className="flex-1 pt-[2px]">
        {tree.map(([name, icon, exp]) => (
          <div key={name} className="flex h-[27px] items-center">
            <span className="flex w-[29px] justify-center pr-[4px]">
              {exp && <svg width="7" height="12" viewBox="0 0 7 12"><path d="M0 0v12l6.500-6z" fill="#555" /></svg>}
            </span>
            {icon}<span className="ml-[9px] whitespace-nowrap pt-[2px]">{name}</span>
          </div>
        ))}
      </div>
      <div className="flex w-[21px] flex-col border-l border-[#bdbdbd]">
        <div className="flex h-[21px] shrink-0 items-center justify-center border-b border-[#bdbdbd] bg-[#f4f4f4]"><svg width="11" height="6" viewBox="0 0 11 6"><path d="M0 6h11L5.500 0z" fill="#555" /></svg></div>
        <div className="h-[229px] shrink-0 border-b border-[#b0b0b0] bg-gradient-to-r from-[#f6f6f6] to-[#ebebeb]" />
        <div className="flex-1 border-b border-[#bdbdbd] bg-[#e2e2e2]" />
        <div className="flex h-[20px] shrink-0 items-center justify-center bg-[#f4f4f4]"><Drop /></div>
      </div>
    </div>
  </div>
);

const LayerRow = ({ l }: { l: Layer }) => (
  <div className={`${l.h} ${l.sel ? "bg-[#308cc6] text-white" : ""} flex shrink-0 items-center overflow-hidden`}>
    <span className="ml-[35px] flex h-[21px] w-[21px] shrink-0 items-center justify-center border-[1.500px] border-[#b0b0b0] bg-white">
      {l.on && <svg width="13" height="15" viewBox="0 0 13 15" fill="none" stroke="#111" strokeWidth="2.600"><path d="M1 8l3.600 5L11.600 1" /></svg>}
    </span>
    <svg width="24" height="24" viewBox="0 0 24 24" className="ml-[9px] shrink-0">
      {l.dot && <circle cx="12" cy="12" r="4.200" fill={l.dot} stroke="#666" strokeWidth=".7" />}
      {l.line && <path d="M0 12h24" stroke={l.line} strokeWidth="1.400" />}
      {l.box && <rect x=".5" y=".5" width="23" height="23" fill="#dd5582" stroke="#a03a5c" />}
    </svg>
    <span className={`${l.on ? "" : "italic text-[#858585]"} ${l.sel ? "underline decoration-2 underline-offset-[2px]" : ""} ml-[9px] w-[195px] shrink-0 whitespace-nowrap pt-[2px] font-bold`}>{l.name}</span>
    {l.mem && <span className="relative shrink-0"><MemI small={l.small} /></span>}
  </div>
);

const LayersPanel = () => (
  <div className="flex flex-1 flex-col">
    <div className="flex h-[7px] shrink-0 items-center justify-center gap-[3px] pr-[8px]">
      {[0, 1, 2, 3, 4, 5].map((i) => <i key={i} className="h-[2px] w-[2px] bg-[#b4b4b4]" />)}
    </div>
    <PanelTitle>Layers</PanelTitle>
    <div className="flex h-[44px] shrink-0 items-center pb-[5px] pl-[12px] pt-px">
      <Brush /><span className="ml-[13.500px]" /><AddGroup /><span className="ml-[13.500px]" /><Eye /><span className="ml-[13.500px]" />
      <span className="relative"><Funnel /><svg className="absolute -right-[3px] bottom-[-2px]" width="9" height="5" viewBox="0 0 9 5"><path d="M0 0h9L4.500 5z" fill="#555" /></svg></span>
      <span className="ml-[14px]" /><Eps phones /><span className="ml-[8px]"><Drop /></span><span className="ml-[11px]" /><Tree down /><span className="ml-[14px]" /><Tree />
      <span className="ml-auto pr-[15px] text-[21px] leading-[18px]">»</span>
    </div>
    <div className="mr-[10px] flex flex-1 flex-col overflow-hidden border border-b-0 border-[#b9b9b9] bg-white">
      {layers.map((l, i) => <LayerRow key={i} l={l} />)}
      <div className="mt-auto flex h-[21px] border-t border-[#bdbdbd]">
        <div className="flex w-[21px] items-center justify-center border-r border-[#bdbdbd] bg-[#f4f4f4]"><svg width="6" height="11" viewBox="0 0 6 11"><path d="M6 0v11L0 5.500z" fill="#555" /></svg></div>
        <div className="w-[138px] border-r border-[#b0b0b0] bg-gradient-to-b from-[#f6f6f6] to-[#ebebeb]" />
        <div className="flex-1 border-r border-[#bdbdbd] bg-[#e2e2e2]" />
        <div className="flex w-[20px] items-center justify-center bg-[#f4f4f4]"><svg width="6" height="11" viewBox="0 0 6 11"><path d="M0 0v11L6 5.500z" fill="#555" /></svg></div>
      </div>
    </div>
  </div>
);

/* circles as [x, y, r] in tripled map pixels */
const circlesA = [
  [81, 51, 14], [163, 111, 15], [419, 300, 12], [667, 543, 12], [713, 576, 14], [691, 601, 15], [907, 565, 22], [1398, 40, 23], [1485, 188, 23], [1255, 278, 19],
  [1170, 365, 19], [1214, 443, 19], [1308, 372, 16], [1361, 448, 16], [1194, 532, 22], [1343, 514, 24], [1461, 500, 27], [1507, 344, 24], [1246, 602, 19], [1231, 690, 21],
  [1349, 631, 11], [1382, 658, 11], [1471, 666, 24], [1406, 730, 23], [1525, 592, 22], [1008, 723, 11], [981, 739, 11], [954, 752, 11], [928, 767, 11], [954, 792, 11],
  [919, 859, 11], [888, 889, 11], [947, 886, 11], [968, 907, 11], [946, 930, 11], [931, 952, 11], [968, 952, 11], [987, 972, 11], [1008, 957, 11],
];
const pathsA =
  "M30 0L75 105L148 245L170 305L208 400L234 480Q255 520 275 548L310 574L480 700L620 798L690 853L741 907L838 990" +
  "M225 15C235 50 210 55 220 75L381 126M372 15L381 127L367 140L155 263M381 127L585 121L650 134L697 157L743 188L780 232L820 272L905 365L984 480L1056 655L1104 747L1141 801L1174 831" +
  "M381 92L600 84L646 62L718 110M564 15L575 84M642 15L646 62M710 15L716 34L736 27L734 15M729 32L738 115L697 157L573 290M712 169L395 477L310 574" +
  "M367 140L371 206L375 215L522 350L592 413L660 487L480 700M371 204L265 240C245 255 245 270 230 280L170 307M308 228L368 353M375 215L380 330L394 477" +
  "M918 15L743 188M638 242L701 300M601 279L664 337M780 232L592 413M760 252L792 286L813 267" +
  "M754 293L776 313L723 367L701 347zM694 358L716 379L667 426L645 405z" +
  "M968 18L905 80Q897 98 912 118L1037 237Q1048 245 1058 237L1278 15M968 18L1121 174M912 118L892 140L959 216L983 188M959 216L970 235M820 272C845 255 870 275 905 268L1011 216" +
  "M1101 198L1182 288L1245 228L1270 219M1070 15L1270 219L1325 246Q1370 258 1408 257Q1425 255 1426 240L1418 128L1490 47L1480 10M1490 47L1518 140M1165 15L1224 72M1205 15L1345 150Q1352 162 1343 172L1291 230M1155 48L1218 112L1252 77L1259 83M1218 112L1295 181L1305 172" +
  "M1182 288L1244 330Q1258 345 1260 370L1301 580L1316 680Q1318 695 1304 706M1301 580L1408 541M1316 680L1322 722L1304 706M1518 243L1438 325L1512 508Q1450 575 1414 568L1408 541L1396 430Q1393 410 1405 400L1451 355" +
  "M862 270Q880 285 890 310Q930 370 980 420C1020 445 1035 475 1040 495L1061 568M836 292L834 350L842 410L898 520M856 314L834 352M834 350L838 432L878 528M858 485L854 540M806 462L942 717M848 541L984 480M922 510L1002 683M876 755L1056 655" +
  "M540 580L479 653L494 678M920 802L823 703Q812 694 802 703L720 792L690 820L690 853M620 798Q665 815 720 792L663 831M700 800L670 837" +
  "M1304 706L1117 891L1210 992M1229 779L1518 1050M1322 722L1518 910M1518 700L1410 804M1290 840L1178 956M1361 908L1276 994M1518 868L1418 956M1418 956L1518 1060M1270 753L1334 814L1318 831L1255 769zM1352 830L1363 839L1348 857L1337 847zM1018 738L1034 752L996 791L981 776z" +
  "M1117 891Q1070 860 1038 905Q1020 965 1032 990M1498 960L1518 980M1428 968L1400 995M1198 980L1190 990";
const pathsB =
  "M260 232L370 325L538 486L585 532L654 602L676 618L711 647L800 678L836 691L943 735L1040 775" +
  "M546 290L560 350L542 383L583 438M638 216L720 307L834 410Q880 438 895 447Q915 455 943 457L1040 550M538 486L720 307M654 602L756 495L949 294L1040 190M880 235L768 346M809 165L699 279M1018 286L1040 305M949 294L1027 370L1040 360M1027 370L943 457M1024 535L1040 522" +
  "M806 445L995 597L1040 605M756 495L784 530L730 575L706 608L676 618M706 608L711 647M784 530Q805 535 820 550L880 605C885 615 875 630 868 648L836 691M784 570L853 637Q880 647 905 645L969 580M868 637Q845 635 833 655L800 678" +
  "M958 567Q990 525 1040 575M1040 750L965 690Q955 670 965 645L995 620Q1000 618 1005 624L1040 655M980 632L1028 670L1040 668M965 650L974 678L1040 727M965 690L974 678" +
  "M780 750L820 729Q828 726 832 733L880 797L872 808M943 735L880 800M849 808L866 800L1040 1025M849 808L880 850L1030 1040M866 862L880 850M866 862L1018 1047L1040 1038M880 850L1040 768M888 860L1040 781M925 882Q940 875 950 902L943 904L1040 848M991 967L1040 945M1026 855L1034 868";
const circlesB = [[615, 449, 9], [598, 466, 9], [576, 486, 8]];

const nodes: [number, number, string][] = [
  [1345, 376.5, "#ea3f58"], [1513, 601, "#2cee00"], [1627.300, 762.700, "#2cee00"], [1660.500, 846, "#ea3f58"], [1679.500, 964, "#ea3f58"],
  [1681, 1094, "#ea3f58"], [1808, 892, "#ea3f58"], [1887, 945.500, "#ea3f58"],
];

const MapCanvas = () => (
  <svg width="599" height="880" viewBox="1306 260 599 880" fill="none" className="shrink-0">
    <rect x="1306" y="260" width="599" height="880" fill="#fff" />
    <path d="M1306 409L1363.500 612L1358 967L1362.300 1140" stroke="#57b04b" strokeWidth="1.500" />
    <g stroke="#57b04b" strokeWidth="4.500" strokeLinejoin="round">
      <g transform="translate(1400 255) scale(.33333)">
        <path d={pathsA} />
        {circlesA.map(([x, y, r], i) => <circle key={i} cx={x} cy={y} r={r} />)}
      </g>
      <g transform="translate(1560 480) scale(.33333)">
        <path d={pathsB} />
        {circlesB.map(([x, y, r], i) => <circle key={i} cx={x} cy={y} r={r} />)}
      </g>
    </g>
    <path d="M1306 320.500L1345 376.500L1513 601L1627.300 762.700L1660.500 846L1679.500 964L1681 1094L1685.500 1140M1627.300 762.700L1808 892L1887 945.500L1905 953" stroke="#1414ae" strokeWidth="1.600" />
    {nodes.map(([x, y, c], i) => <circle key={i} cx={x} cy={y} r="5.600" fill={c} stroke="#3a3a3a" strokeWidth="1.100" />)}
  </svg>
);

const fieldCls = "flex items-center rounded-[3px] border-[1.500px] border-[#aaa] bg-white";

const StatusBar = () => (
  <div className="flex h-[45px] items-start pl-[6px] pt-[6px]">
    <div className={`${fieldCls} h-[35px] w-[371px] shrink-0 gap-[10px] pl-[11px] text-[#8d8d8d]`}>
      <svg width="21" height="21" viewBox="0 0 21 21" fill="none" stroke="#8a8a8a" strokeWidth="1.800"><circle cx="9" cy="8" r="6.400" /><path d="M13.400 12.800L19.400 19" /></svg>
      <span>Type to locate (Ctrl+K)</span>
    </div>
    <div className="flex h-[34px] items-center text-[13.300px]">
      <span className="ml-[54px] flex w-[5px] justify-end overflow-hidden">d</span>
      <div className={`${fieldCls} ml-[7px] h-[34px] w-[176px] justify-center whitespace-nowrap text-[13.600px]`}>7.06103°, -73.88767°</div>
      <svg width="24" height="24" viewBox="0 0 24 24" fill="none" className="ml-[6px]">
        <path d="M5 1.500c3-1 5 1 7 5l3 8-6 2C5 12 2 8 3 3z" fill="#222" /><path d="M5 4l6 10M8 3l5 10" stroke="#fff" strokeWidth="1.400" />
        <path d="M7 14c5-4 12-3 14 2c1 4-3 7-7 7-3 0-5-1-6-4z" fill="#222" /><circle cx="12" cy="17.500" r="2.600" fill="#fff" /><circle cx="17" cy="19" r="2.200" fill="#fff" />
        <path d="M15 4l2-1M18 4l2-2M17 7l3-2" stroke="#444" strokeWidth="1.200" /><path d="M1 16l4 1M1 19l4-1" stroke="#666" />
      </svg>
      <span className="ml-[20px] w-[5px] overflow-hidden">a</span>
      <div className={`${fieldCls} ml-[6px] h-[35px] w-[143px] pl-[5px]`}>
        <span className="mr-auto pt-[2px]">1:12474</span>
        <span className="flex h-full w-[30px] items-center justify-center border-l border-[#b4b4b4] bg-gradient-to-b from-[#f6f6f6] to-[#e6e6e6]"><Drop /></span>
      </div>
      <svg width="20" height="24" viewBox="0 0 20 24" className="ml-[18px]" fill="none"><path d="M4.600 12V7a5.400 5.400 0 0 1 10.800 0v5" stroke="#777" strokeWidth="2.400" /><rect x="1" y="11" width="18" height="12" rx="1.500" fill="#5e5e5e" /></svg>
      <span className="ml-[11px] w-[7px] overflow-hidden pt-[2px]">r</span>
      <div className={`${fieldCls} ml-[6px] h-[35px] w-[90px] shrink-0 pl-[6px] pt-[2px]`}>100%</div>
    </div>
  </div>
);

const barBg = "flex items-stretch overflow-hidden bg-gradient-to-b from-[#f8f8f8] to-[#ebebeb] border-b pt-[2px]";

const MainWindow = () => (
  <section className="h-[1137px] w-[942px] overflow-hidden rounded-[17px] border-[3px] border-black bg-black text-black">
    <div className="flex h-full w-[936px] flex-col bg-[#eeeeee] brightness-[.855]">
      <div className="flex h-[29px] shrink-0 items-center overflow-hidden border-b border-[#cfcfcf] pl-[16px]">
        {menu.map(([a, b, c, w]) => (
          <span key={a + b + c} className={`${w} shrink-0 whitespace-nowrap`}>{a}<u className="underline-offset-[3px]">{b}</u>{c}</span>
        ))}
      </div>
      <div className={`${barBg} h-[58px] shrink-0 border-b-2 border-[#b8b8b8]`}>
        <Grip w="w-[19px]" />
        <GSlot><NewDoc s={36} /></GSlot><GSlot><OpenDir s={36} /></GSlot><GSlot><Floppy s={36} /></GSlot><GSlot><NewLayout s={36} /></GSlot><GSlot><LayoutMgr s={36} /></GSlot><GSlot><StyleMgr s={36} /></GSlot>
        <Grip w="w-[24px]" />
        <GSlot><span className="flex h-[46px] w-[48px] items-center justify-center rounded-[4px] border border-[#a0a0a0] bg-[#dcdcdc]"><Hand s={36} /></span></GSlot>
        <GSlot><PanSel s={36} /></GSlot><GSlot><Zoom kind="in" s={36} /></GSlot><GSlot><Zoom kind="out" s={36} /></GSlot><GSlot><Zoom kind="full" s={36} /></GSlot><GSlot><ZoomSel s={36} /></GSlot>
        <GSlot><Zoom kind="layer" s={36} /></GSlot><GSlot><Zoom kind="one" s={36} off /></GSlot><GSlot><Zoom kind="last" s={36} /></GSlot><GSlot><Zoom kind="next" s={36} off /></GSlot><GSlot><MapView s={36} /></GSlot><GSlot><Map3D s={36} /></GSlot>
      </div>
      <div className={`${barBg} h-[59px] shrink-0 border-[#b8b8b8]`}>
        <Grip w="w-[19px]" />
        <GSlot><AddLayers s={36} /></GSlot><GSlot><GeoPkg star s={36} /></GSlot><GSlot><NewShape s={36} /></GSlot><GSlot><Feather star s={36} /></GSlot><GSlot><Chip s={36} /></GSlot><GSlot><MeshI s={36} /></GSlot><GSlot><Virtual s={36} /></GSlot>
        <Grip w="w-[26px]" />
        <GSlot w="w-[46.5px]"><span className="-ml-[5px]"><Pencils s={34} off /></span><span className="absolute bottom-[12px] right-[3px] scale-75"><Drop faint /></span></GSlot>
        <GSlot><PencilI s={36} /></GSlot><GSlot><Floppy pen s={36} off /></GSlot>
        <GSlot><Digitize s={36} off /></GSlot><span className="flex w-[19px] shrink-0 items-center pl-[3px] pt-[10px]"><Drop faint /></span>
        <GSlot><Points s={36} off /></GSlot><GSlot><Vertex s={36} off /></GSlot><span className="flex w-[18px] shrink-0 items-center pl-[2px] pt-[10px]"><Drop faint /></span>
        <GSlot><Multi s={36} off /></GSlot><GSlot><Trash s={36} off /></GSlot><GSlot><Scissors s={36} off /></GSlot><GSlot><Copy s={36} off /></GSlot><GSlot><Paste s={36} off /></GSlot>
      </div>
      <div className={`${barBg} h-[57px] shrink-0 border-[#b8b8b8]`}>
        <Grip w="w-[19px]" />
        <GSlot><GreenSearch s={36} /></GSlot><GSlot><OsmI s={36} /></GSlot>
      </div>
      <div className="flex h-[883px] shrink-0 overflow-hidden border-b border-[#b4b4b4]">
        <div className="flex w-[337px] shrink-0 flex-col border-r border-[#b9b9b9]">
          <BrowserPanel />
          <LayersPanel />
        </div>
        <div className="mt-[2px] border-t border-[#c4c4c4]"><MapCanvas /></div>
      </div>
      <StatusBar />
    </div>
  </section>
);

export default function App() {
  return (
    <div className="flex h-[1200px] w-[1920px] flex-col overflow-hidden bg-gradient-to-b from-[#161621] via-[#171724] to-[#1b1b29] font-['DejaVu_Sans',sans-serif] text-[18px] leading-none">
      <TopBar />
      <div className="mt-[15px] flex pl-[12px]">
        <AttributeWindow />
        <div className="relative w-[12px] overflow-hidden bg-[linear-gradient(to_bottom,#161621_0%,#1a1a28_26%,#3e3e52_29%,#5e5e74_32%,#4c4c60_38%,#343446_44%,#242432_49%,#252533_55%,#3a3a4e_60%,#2a2a3a_66%,#1c1c2a_78%,#191926_100%)]">
          <i className="absolute left-[2px] top-[555px] h-[38px] w-[20px] rounded-l-[10px] bg-[#cf9a9e]" />
        </div>
        <MainWindow />
      </div>
    </div>
  );
}
